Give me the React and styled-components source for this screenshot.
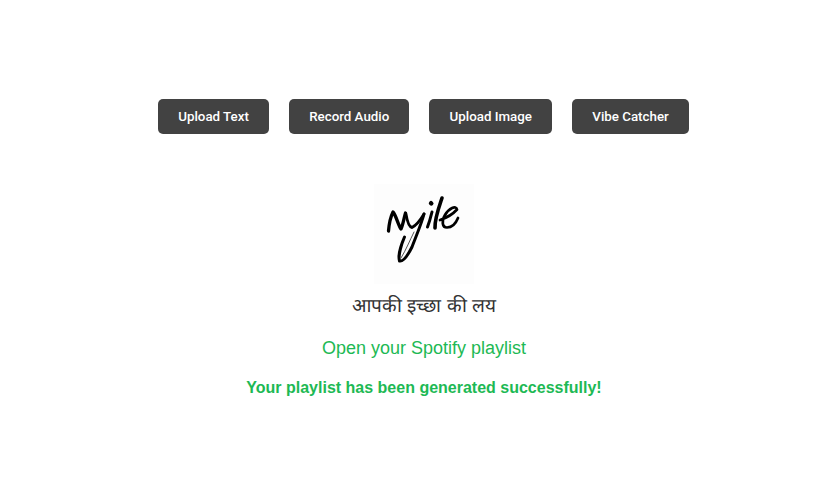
import React from "react";
import styled, { createGlobalStyle } from "styled-components";

const GlobalStyle = createGlobalStyle`
  html, body {
    margin: 0;
    padding: 0;
    background: #ffffff;
  }
  body {
    font-family: "Liberation Sans", Arial, sans-serif;
  }
`;

const BUTTONS = ["Upload Text", "Record Audio", "Upload Image", "Vibe Catcher"];

// handwritten wordmark
const Logo = () => (
  <LogoBox>
    <svg width="100" height="100" viewBox="0 0 100 100" fill="none" stroke="#000" strokeLinecap="round" strokeLinejoin="round">
      <path d="M14.5 47 C15 41 16.5 33 19 28 C22 31 24 41 27 45 C29 41 30 34 31.5 29" strokeWidth="3.3" />
      <path d="M32 30 C33 36 35 43 38 43.5 C43 41 47 35 50 30" strokeWidth="2.8" />
      <path d="M50 30 C48 38 43 50 38 63 C34 71 29 78 25.5 77 C24 72 27 61 30.5 53" strokeWidth="3" />
      <path d="M40 48 C36 56 32 66 27 74" strokeWidth="1" stroke="#555" />
      <path d="M58 28 C56.5 34 55 39 53.5 43" strokeWidth="3" />
      <path d="M57 19.2 L57.3 19.5" strokeWidth="4.4" />
      <path d="M68 14 C65 23 60.5 35 61 44" strokeWidth="3.6" />
      <path d="M66 36 C72 34 79 30 83 25.5 C82 21 75 24 71 31 C67.5 37 68 43.5 73 43.5 C78 43.5 82 39 84 34" strokeWidth="2.7" />
    </svg>
  </LogoBox>
);

const App = () => (
  <>
    <GlobalStyle />
    <Page>
      <Toolbar>
        {BUTTONS.map((label) => (
          <ActionButton key={label}>{label}</ActionButton>
        ))}
      </Toolbar>
      <Logo />
      <Tagline>आपकी इच्छा की लय</Tagline>
      <PlaylistLink href="#">Open your Spotify playlist</PlaylistLink>
      <Success>Your playlist has been generated successfully!</Success>
    </Page>
  </>
);

const Page = styled.div`
  display: flex;
  flex-direction: column;
  align-items: center;
  margin-left: 8px;
  padding-top: 99px;
  height: 396px;
`;

const Toolbar = styled.div`
  display: flex;
  gap: 20px;
  margin-right: 1px;
`;

const ActionButton = styled.button`
  height: 35px;
  padding: 0 20.15px;
  border: none;
  border-radius: 5px;
  background: #424242;
  color: #ffffff;
  font-family: "Roboto", "Liberation Sans", sans-serif;
  font-size: 13.333px;
  font-weight: 500;
`;

const LogoBox = styled.div`
  width: 100px;
  height: 100px;
  margin-top: 50px;
  background: #fdfdfd;
`;

const Tagline = styled.div`
  margin-top: 8px;
  font-size: 19px;
  font-weight: 400;
  line-height: 28px;
  color: #333333;
`;

const PlaylistLink = styled.a`
  margin-top: 18px;
  font-size: 18px;
  line-height: 21px;
  color: #1db954;
  text-decoration: none;
`;

const Success = styled.p`
  margin: 20px 0 0;
  font-size: 16px;
  line-height: 18px;
  font-weight: 700;
  color: #1db954;
`;

export default App;
